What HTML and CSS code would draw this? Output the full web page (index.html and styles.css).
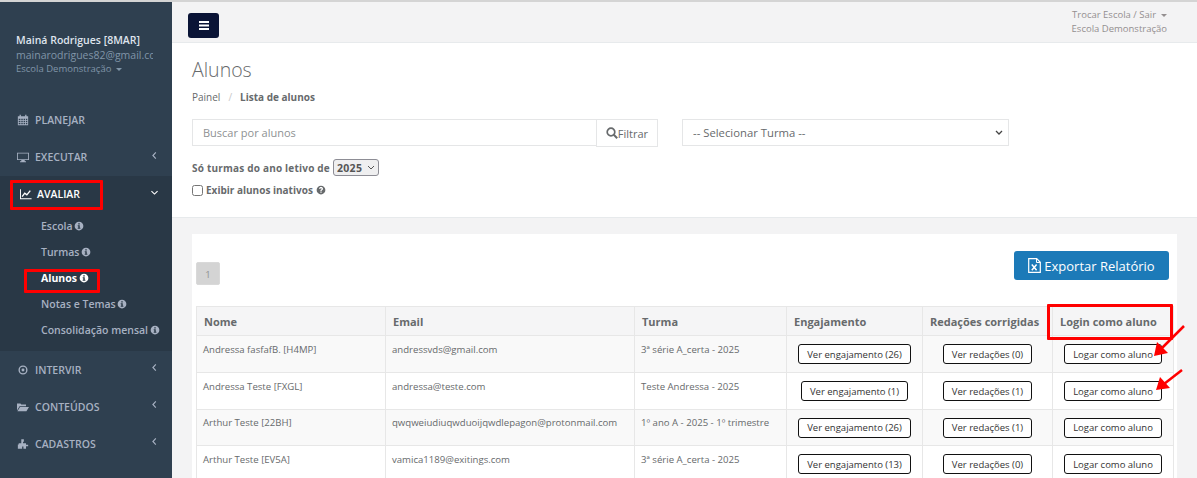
FILE: index.html
```html
<!DOCTYPE html>
<html lang="en">
<head>
    <meta charset="UTF-8">
    <title>Alunos</title>
    <link rel="stylesheet" href="styles.css">
</head>
<body>
    <svg class="sprites" width="0" height="0">
        <symbol id="i-info" viewBox="0 0 16 16"><path fill-rule="evenodd" d="M8 1a7 7 0 1 0 0 14A7 7 0 0 0 8 1zM6.800 3.400h2.400v2H6.800zM5.900 6.600h3.300v4.300h1v1.600H5.900v-1.600h1V8.200h-1z"/></symbol>
        <symbol id="i-left" viewBox="0 0 8 10"><path d="M5.500 1.500 2.200 5l3.300 3.500" fill="none" stroke="currentColor" stroke-width="1.300"/></symbol>
    </svg>

    <aside class="sidebar">
        <div class="profile">
            <strong>Mainá Rodrigues [8MAR]</strong>
            <span class="profile-mail">mainarodrigues82@gmail.com</span>
            <span class="profile-school">Escola Demonstração <i class="caret"></i></span>
        </div>
        <nav>
            <a class="nav-item">
                <svg class="nav-icon" viewBox="0 0 14 14"><path fill-rule="evenodd" d="M1 2.500h2V1h1.500v1.500h5V1H11v1.500h2V13H1zM2 5.500v1.500h2V5.500zm3 0v1.500h1.700V5.500zm2.700 0v1.500h1.700V5.500zm2.700 0v1.500H12V5.500zM2 8v1.500h2V8zm3 0v1.500h1.700V8zm2.700 0v1.500h1.700V8zm2.700 0v1.500H12V8zM2 10.500V12h2v-1.500zm3 0V12h1.700v-1.500zm2.700 0V12h1.700v-1.500zm2.700 0V12H12v-1.500z"/></svg>
                PLANEJAR
            </a>
            <a class="nav-item">
                <svg class="nav-icon" viewBox="0 0 14 14"><path fill-rule="evenodd" d="M0 2h14v8.500H9V12h1.500v1h-7v-1H5v-1.500H0zm1 1v6.500h12V3z"/></svg>
                EXECUTAR
                <svg class="chev"><use href="#i-left"/></svg>
            </a>
            <div class="nav-open">
                <a class="nav-item active">
                    <svg class="nav-icon" viewBox="0 0 14 14"><path d="M.5 1.500v11h13" fill="none" stroke="currentColor" stroke-width="1.200"/><path d="M2.500 10l3-4 2.500 2 4-5" fill="none" stroke="currentColor" stroke-width="1.600"/></svg>
                    AVALIAR
                    <svg class="chev chev-down"><use href="#i-left"/></svg>
                </a>
                <a class="sub-item">Escola <svg class="info"><use href="#i-info"/></svg></a>
                <a class="sub-item">Turmas <svg class="info"><use href="#i-info"/></svg></a>
                <a class="sub-item current">Alunos <svg class="info"><use href="#i-info"/></svg></a>
                <a class="sub-item">Notas e Temas <svg class="info"><use href="#i-info"/></svg></a>
                <a class="sub-item">Consolidação mensal <svg class="info"><use href="#i-info"/></svg></a>
            </div>
            <a class="nav-item">
                <svg class="nav-icon" viewBox="0 0 14 14"><circle cx="7" cy="7" r="4.500" fill="none" stroke="currentColor" stroke-width="1.600"/><circle cx="7" cy="7" r="1.700"/></svg>
                INTERVIR
                <svg class="chev"><use href="#i-left"/></svg>
            </a>
            <a class="nav-item">
                <svg class="nav-icon" viewBox="0 0 14 14"><path d="M0 3h4l1 1.200h5.500V6H3L0 11zM3.500 7H14l-3 5H.5z"/></svg>
                CONTEÚDOS
                <svg class="chev"><use href="#i-left"/></svg>
            </a>
            <a class="nav-item">
                <svg class="nav-icon" viewBox="0 0 14 14"><path d="M5 1.500h3v3H7v1.500h3.500V8H13v1.500h-2.500v3H7.500V10H6v2.500H1V7.500h1V6h3V4.500H5z"/></svg>
                CADASTROS
                <svg class="chev"><use href="#i-left"/></svg>
            </a>
        </nav>
    </aside>

    <div class="page">
        <header class="topbar">
            <button class="menu-btn" aria-label="Menu">
                <svg width="10" height="9" viewBox="0 0 10 9"><path d="M0 0h10v2H0zM0 3.500h10v2H0zM0 7h10v2H0z" fill="#fff"/></svg>
            </button>
            <div class="topbar-right">
                <span>Trocar Escola / Sair <i class="caret"></i></span>
                <span>Escola Demonstração</span>
            </div>
        </header>

        <section class="heading">
            <h2>Alunos</h2>
            <div class="crumbs"><span>Painel</span><span class="sep">/</span><strong>Lista de alunos</strong></div>
            <div class="filters">
                <div class="search">
                    <input type="text" placeholder="Buscar por alunos">
                    <button class="filter-btn">
                        <svg width="12" height="12" viewBox="0 0 12 12"><circle cx="5" cy="5" r="3.800" fill="none" stroke="currentColor" stroke-width="1.700"/><path d="m7.800 7.800 3.400 3.400" stroke="currentColor" stroke-width="2"/></svg>Filtrar
                    </button>
                </div>
                <select class="turma-select"><option>-- Selecionar Turma --</option></select>
            </div>
            <div class="year-row">
                <label>Só turmas do ano letivo de</label>
                <select class="year-select"><option>2025</option></select>
            </div>
            <div class="inactive-row">
                <input type="checkbox">
                <label>Exibir alunos inativos</label>
                <svg class="help" viewBox="0 0 16 16"><path fill-rule="evenodd" d="M8 1a7 7 0 1 0 0 14A7 7 0 0 0 8 1zM7 10.500h2v2H7zM4.800 6C4.900 4.200 6.200 3.300 8 3.300c1.900 0 3.200 1.100 3.200 2.600 0 1.300-.8 1.900-1.500 2.400-.5.300-.7.600-.7 1.200H7c0-1.200.4-1.800 1.200-2.300.6-.4.900-.7.900-1.200 0-.6-.5-1-1.100-1-.7 0-1.100.4-1.200 1z"/></svg>
            </div>
        </section>

        <section class="content">
            <div class="panel">
                <div class="panel-top">
                    <span class="page-num">1</span>
                    <button class="export-btn">
                        <svg width="13" height="15" viewBox="0 0 13 15"><path d="M.7.700h8l3.600 3.600v10H.7z" fill="none" stroke="currentColor" stroke-width="1.200"/><path d="M8.500.700v3.800h3.800" fill="none" stroke="currentColor"/><path d="m3.800 6.500 4.800 5.800m0-5.800-4.800 5.800" stroke="currentColor" stroke-width="1.500"/></svg>
                        Exportar Relatório
                    </button>
                </div>
                <table class="students">
                    <thead>
                        <tr>
                            <th class="col-name">Nome</th>
                            <th class="col-mail">Email</th>
                            <th class="col-class">Turma</th>
                            <th class="col-eng">Engajamento</th>
                            <th class="col-red">Redações corrigidas</th>
                            <th class="col-login">Login como aluno</th>
                        </tr>
                    </thead>
                    <tbody>
                        <tr>
                            <td>Andressa fasfafB. [H4MP]</td>
                            <td>andressvds@gmail.com</td>
                            <td>3ª série A_certa - 2025</td>
                            <td class="act"><button class="row-btn">Ver engajamento (26)</button></td>
                            <td class="act"><button class="row-btn">Ver redações (0)</button></td>
                            <td class="act"><button class="row-btn">Logar como aluno</button></td>
                        </tr>
                        <tr>
                            <td>Andressa Teste [FXGL]</td>
                            <td>andressa@teste.com</td>
                            <td>Teste Andressa - 2025</td>
                            <td class="act"><button class="row-btn">Ver engajamento (1)</button></td>
                            <td class="act"><button class="row-btn">Ver redações (1)</button></td>
                            <td class="act"><button class="row-btn">Logar como aluno</button></td>
                        </tr>
                        <tr>
                            <td>Arthur Teste [22BH]</td>
                            <td>qwqweiudiuqwduoijqwdlepagon@protonmail.com</td>
                            <td>1º ano A - 2025 - 1º trimestre</td>
                            <td class="act"><button class="row-btn">Ver engajamento (26)</button></td>
                            <td class="act"><button class="row-btn">Ver redações (1)</button></td>
                            <td class="act"><button class="row-btn">Logar como aluno</button></td>
                        </tr>
                        <tr>
                            <td>Arthur Teste [EV5A]</td>
                            <td>vamica1189@exitings.com</td>
                            <td>3ª série A_certa - 2025</td>
                            <td class="act"><button class="row-btn">Ver engajamento (13)</button></td>
                            <td class="act"><button class="row-btn">Ver redações (0)</button></td>
                            <td class="act"><button class="row-btn">Logar como aluno</button></td>
                        </tr>
                    </tbody>
                </table>
            </div>
        </section>
    </div>

    <!-- annotations drawn over the screenshot -->
    <div class="mark mark-avaliar"></div>
    <div class="mark mark-alunos"></div>
    <div class="mark mark-login"></div>
    <svg class="arrows" width="1197" height="478" viewBox="0 0 1197 478">
        <path d="M1184 326 1160 350" stroke="#f00" stroke-width="2.500"/>
        <path d="M1154 356 1157 342 1168 353z" fill="#f00"/>
        <path d="M1182 370 1164 384" stroke="#f00" stroke-width="2.500"/>
        <path d="M1156 390 1160 377 1170 388z" fill="#f00"/>
    </svg>
</body>
</html>
```

FILE: styles.css
```css
* {
    box-sizing: border-box;
}
html, body {
    height: 100%;
}
body {
    margin: 0;
    display: flex;
    height: 478px;
    overflow: hidden;
    position: relative;
    font-family: "Open Sans", sans-serif;
    font-size: 10.5px;
    color: #676a6c;
    background-color: #f3f3f4;
    border-top: 2px solid #d4d4d4;
}
.sprites {
    position: absolute;
}
.sidebar {
    width: 172px;
    flex-shrink: 0;
    background-color: #2f4050;
    color: #a7b1c2;
    overflow: hidden;
}
.profile {
    padding: 31px 0 0 16px;
    height: 100px;
    white-space: nowrap;
    display: flex;
    flex-direction: column;
}
.profile strong {
    font-size: 10.5px;
    font-weight: 600;
    color: #dfe4ed;
    line-height: 14px;
}
.profile-mail {
    font-size: 10.5px;
    line-height: 15px;
    margin-top: 1px;
    color: #8095a8;
    width: 137px;
    overflow: hidden;
}
.profile-school {
    font-size: 9.500px;
    line-height: 12px;
    color: #8095a8;
}
.caret {
    display: inline-block;
    width: 0;
    height: 0;
    margin-left: 2px;
    vertical-align: middle;
    border-top: 3px solid currentColor;
    border-left: 3px solid transparent;
    border-right: 3px solid transparent;
}
.nav-item {
    display: flex;
    align-items: center;
    height: 37px;
    padding: 0 0 2px 17px;
    font-size: 10.500px;
    font-weight: 600;
    color: #a7b1c2;
    position: relative;
}
.nav-open ~ .nav-item {
    padding-bottom: 0;
}
.nav-icon {
    width: 12px;
    height: 12px;
    margin-right: 6px;
    fill: currentColor;
    flex-shrink: 0;
}
.chev {
    position: absolute;
    right: 14px;
    top: 12px;
    width: 7px;
    height: 9px;
}
.chev-down {
    transform: rotate(-90deg);
}
.nav-open {
    background-color: #293846;
    height: 175px;
    padding-bottom: 8px;
}
.nav-item.active {
    padding-left: 20px;
    color: #fff;
}
.nav-item.active .nav-icon {
    margin-right: 5px;
}
.sub-item {
    display: block;
    height: 26px;
    line-height: 26px;
    padding-left: 41px;
    font-weight: 600;
    font-size: 10.500px;
    color: #a7b1c2;
    white-space: nowrap;
}
.sub-item.current {
    color: #fff;
    font-weight: 700;
}
.info {
    width: 10px;
    height: 10px;
    margin-left: -1px;
    fill: currentColor;
    vertical-align: -1px;
}
.page {
    flex: 1;
    min-width: 0;
}
.topbar {
    display: flex;
    justify-content: space-between;
    height: 41px;
    padding: 11px 30px 0 16px;
    border-bottom: 1px solid #e7eaec;
}
.menu-btn {
    width: 31px;
    height: 25px;
    border: none;
    border-radius: 3px;
    background-color: #0a1436;
    display: flex;
    align-items: center;
    justify-content: center;
}
.topbar-right {
    margin-top: -5px;
    display: flex;
    flex-direction: column;
    align-items: center;
    line-height: 14px;
    font-size: 9.500px;
    color: #948f90;
}
.heading {
    height: 175px;
    background-color: #fff;
    padding: 14px 20px 0;
    border-bottom: 1px solid #e7eaec;
}
.heading h2 {
    margin: 0;
    font-size: 19.500px;
    font-weight: 300;
    line-height: 26px;
    color: #676a6c;
}
.crumbs {
    display: flex;
    margin-top: 7px;
    line-height: 14px;
    font-size: 10px;
}
.crumbs .sep {
    margin: 0 8px;
    color: #c8c8c8;
}
.crumbs strong {
    font-weight: 700;
}
.filters {
    display: flex;
    margin-top: 15px;
}
.search {
    display: flex;
    width: 466px;
}
.search input {
    width: 404px;
    height: 27px;
    padding: 0 10px;
    border: 1px solid #e5e6e7;
    border-right: none;
    font: inherit;
    font-size: 11px;
    outline: none;
}
.search input::placeholder {
    color: #8e9193;
}
.filter-btn {
    width: 62px;
    height: 28px;
    border: 1px solid #e5e6e7;
    background-color: #fff;
    color: #676a6c;
    font: inherit;
    font-size: 11px;
    padding: 0;
    display: flex;
    align-items: center;
    justify-content: center;
}
.turma-select {
    width: 327px;
    height: 27px;
    margin-left: 24px;
    padding: 0 10px;
    border: 1px solid #e5e6e7;
    border-radius: 0;
    background: #fff url("data:image/svg+xml,%3Csvg xmlns='http://www.w3.org/2000/svg' width='8' height='6'%3E%3Cpath d='M1 1l3 3 3-3' fill='none' stroke='%23444' stroke-width='1.300'/%3E%3C/svg%3E") no-repeat right 5px center;
    appearance: none;
    color: #676a6c;
    font: inherit;
    font-size: 11.300px;
}
.year-row {
    display: flex;
    align-items: center;
    margin-top: 12px;
    font-weight: 700;
    font-size: 10px;
    letter-spacing: .2px;
    gap: 3px;
}
.year-select {
    width: 46px;
    height: 17px;
    padding: 0 0 0 3px;
    border: 1px solid #8d8d95;
    border-radius: 3px;
    background: #efeff0 url("data:image/svg+xml,%3Csvg xmlns='http://www.w3.org/2000/svg' width='8' height='6'%3E%3Cpath d='M1 1l3 3 3-3' fill='none' stroke='%23555' stroke-width='1'/%3E%3C/svg%3E") no-repeat right 3px center;
    appearance: none;
    color: #555;
    font: inherit;
    font-size: 10.500px;
    letter-spacing: .3px;
    font-weight: 700;
}
.inactive-row {
    display: flex;
    align-items: center;
    margin-top: 7px;
    font-weight: 700;
    font-size: 10px;
}
.inactive-row input {
    width: 11px;
    height: 11px;
    margin: 0 3px 0 0;
}
.help {
    width: 10px;
    height: 10px;
    margin-left: 3px;
    fill: currentColor;
}
.content {
    padding: 16px 20px 0;
}
.panel {
    background-color: #fff;
    padding: 15px 4px 0;
}
.panel-top {
    display: flex;
    justify-content: space-between;
    align-items: flex-start;
    height: 57px;
    padding-right: 4px;
}
.page-num {
    margin-top: 13px;
    width: 24px;
    height: 23px;
    line-height: 23px;
    text-align: center;
    border-radius: 2px;
    border: 1px solid #d9d9d9;
    background-color: #d4d4d4;
    color: #8f9192;
    font-size: 9.500px;
}
.export-btn {
    display: flex;
    align-items: center;
    justify-content: center;
    gap: 3px;
    width: 155px;
    height: 29px;
    margin-top: 2px;
    border: none;
    border-radius: 3px;
    background-color: #1c7ab8;
    color: #fff;
    font: inherit;
    font-size: 13px;
}
.students {
    width: 977px;
    border-collapse: collapse;
    table-layout: fixed;
    font-size: 9.600px;
}
.students th, .students td {
    border: 1px solid #e7e7e7;
}
.students th {
    height: 29px;
    padding: 0 7px;
    background-color: #f5f5f6;
    text-align: left;
    font-size: 11px;
    font-weight: 700;
    white-space: nowrap;
}
.students td {
    height: 37px;
    padding: 0 6px 10px 6px;
    white-space: nowrap;
    overflow: hidden;
}
.students tbody tr:nth-child(3) td {
    height: 36px;
}
.students tbody tr:nth-child(odd) {
    background-color: #f9f9f9;
}
.students td.act {
    padding: 0;
    text-align: center;
}
.col-name { width: 189px; }
.col-mail { width: 249px; }
.col-class { width: 152px; }
.col-eng { width: 136px; }
.col-red { width: 130px; }
.col-login { width: 121px; }
.row-btn {
    height: 20px;
    padding: 0 8px;
    border: 1px solid #111;
    border-radius: 3px;
    background-color: #fff;
    color: #333;
    font: inherit;
    font-size: 9.500px;
}
.mark {
    position: absolute;
    border: 3px solid #f00;
    border-radius: 1px;
}
.mark-avaliar {
    left: 10px;
    top: 178px;
    width: 93px;
    height: 30px;
}
.mark-alunos {
    left: 24px;
    top: 267px;
    width: 76px;
    height: 24px;
}
.mark-login {
    left: 1047px;
    top: 302px;
    width: 126px;
    height: 36px;
}
.arrows {
    position: absolute;
    left: 0;
    top: -2px;
    pointer-events: none;
}
```
